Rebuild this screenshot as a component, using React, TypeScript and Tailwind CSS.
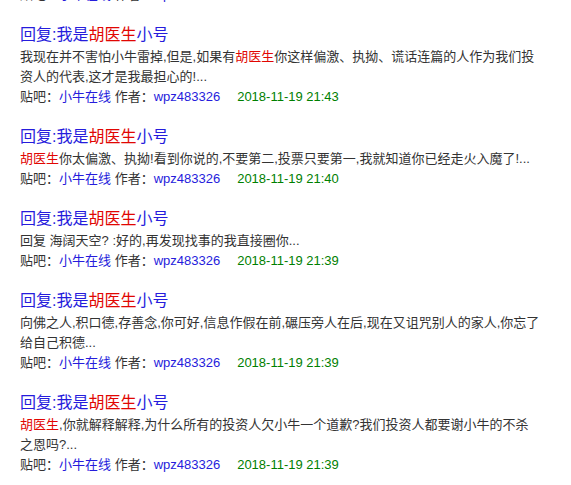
import React from "react";

const BLUE = "text-[#261cdc]";
const RED = "text-[#e10602]";

type Seg = { t: string; red?: boolean };

const items: { body: Seg[]; date: string }[] = [
  {
    body: [
      { t: "我现在并不害怕小牛雷掉,但是,如果有" },
      { t: "胡医生", red: true },
      { t: "你这样偏激、执拗、谎话连篇的人作为我们投资人的代表,这才是我最担心的!..." },
    ],
    date: "2018-11-19 21:43",
  },
  {
    body: [
      { t: "胡医生", red: true },
      { t: "你太偏激、执拗!看到你说的,不要第二,投票只要第一,我就知道你已经走火入魔了!..." },
    ],
    date: "2018-11-19 21:40",
  },
  {
    body: [{ t: "回复 海阔天空? :好的,再发现找事的我直接圈你..." }],
    date: "2018-11-19 21:39",
  },
  {
    body: [
      {
        t: "向佛之人,积口德,存善念,你可好,信息作假在前,碾压旁人在后,现在又诅咒别人的家人,你忘了给自己积德...",
      },
    ],
    date: "2018-11-19 21:39",
  },
  {
    body: [
      { t: "胡医生", red: true },
      { t: ",你就解释解释,为什么所有的投资人欠小牛一个道歉?我们投资人都要谢小牛的不杀之恩吗?..." },
    ],
    date: "2018-11-19 21:39",
  },
];

function Meta({ date }: { date: string }) {
  return (
    <div className="text-[13px] leading-[20px] text-[#333] whitespace-nowrap">
      贴吧：<span className={BLUE}>小牛在线</span> 作者：<span className={BLUE}>wpz483326</span>
      <span className="ml-[17px] text-[#008000]">{date}</span>
    </div>
  );
}

export default function App() {
  return (
    <div
      className="w-[571px] h-[485px] overflow-hidden bg-white"
      style={{ fontFamily: '"Liberation Sans", Arial, "Noto Sans CJK SC", sans-serif' }}
    >
      <div className="pl-[20px] pr-[30px] -mt-[15px]">
        <div className="mb-[18px]">
          <Meta date="2018-11-19 21:44" />
        </div>
        {items.map((it, i) => (
          <div key={i} className="mb-[18px]">
            <div className={`text-[16px] leading-[24px] ${BLUE}`}>
              回复:我是<span className={RED}>胡医生</span>小号
            </div>
            <div className="text-[13px] leading-[20px] text-[#333] w-[520px]">
              {it.body.map((s, j) => (
                <span key={j} className={s.red ? RED : undefined}>
                  {s.t}
                </span>
              ))}
            </div>
            <Meta date={it.date} />
          </div>
        ))}
      </div>
    </div>
  );
}
